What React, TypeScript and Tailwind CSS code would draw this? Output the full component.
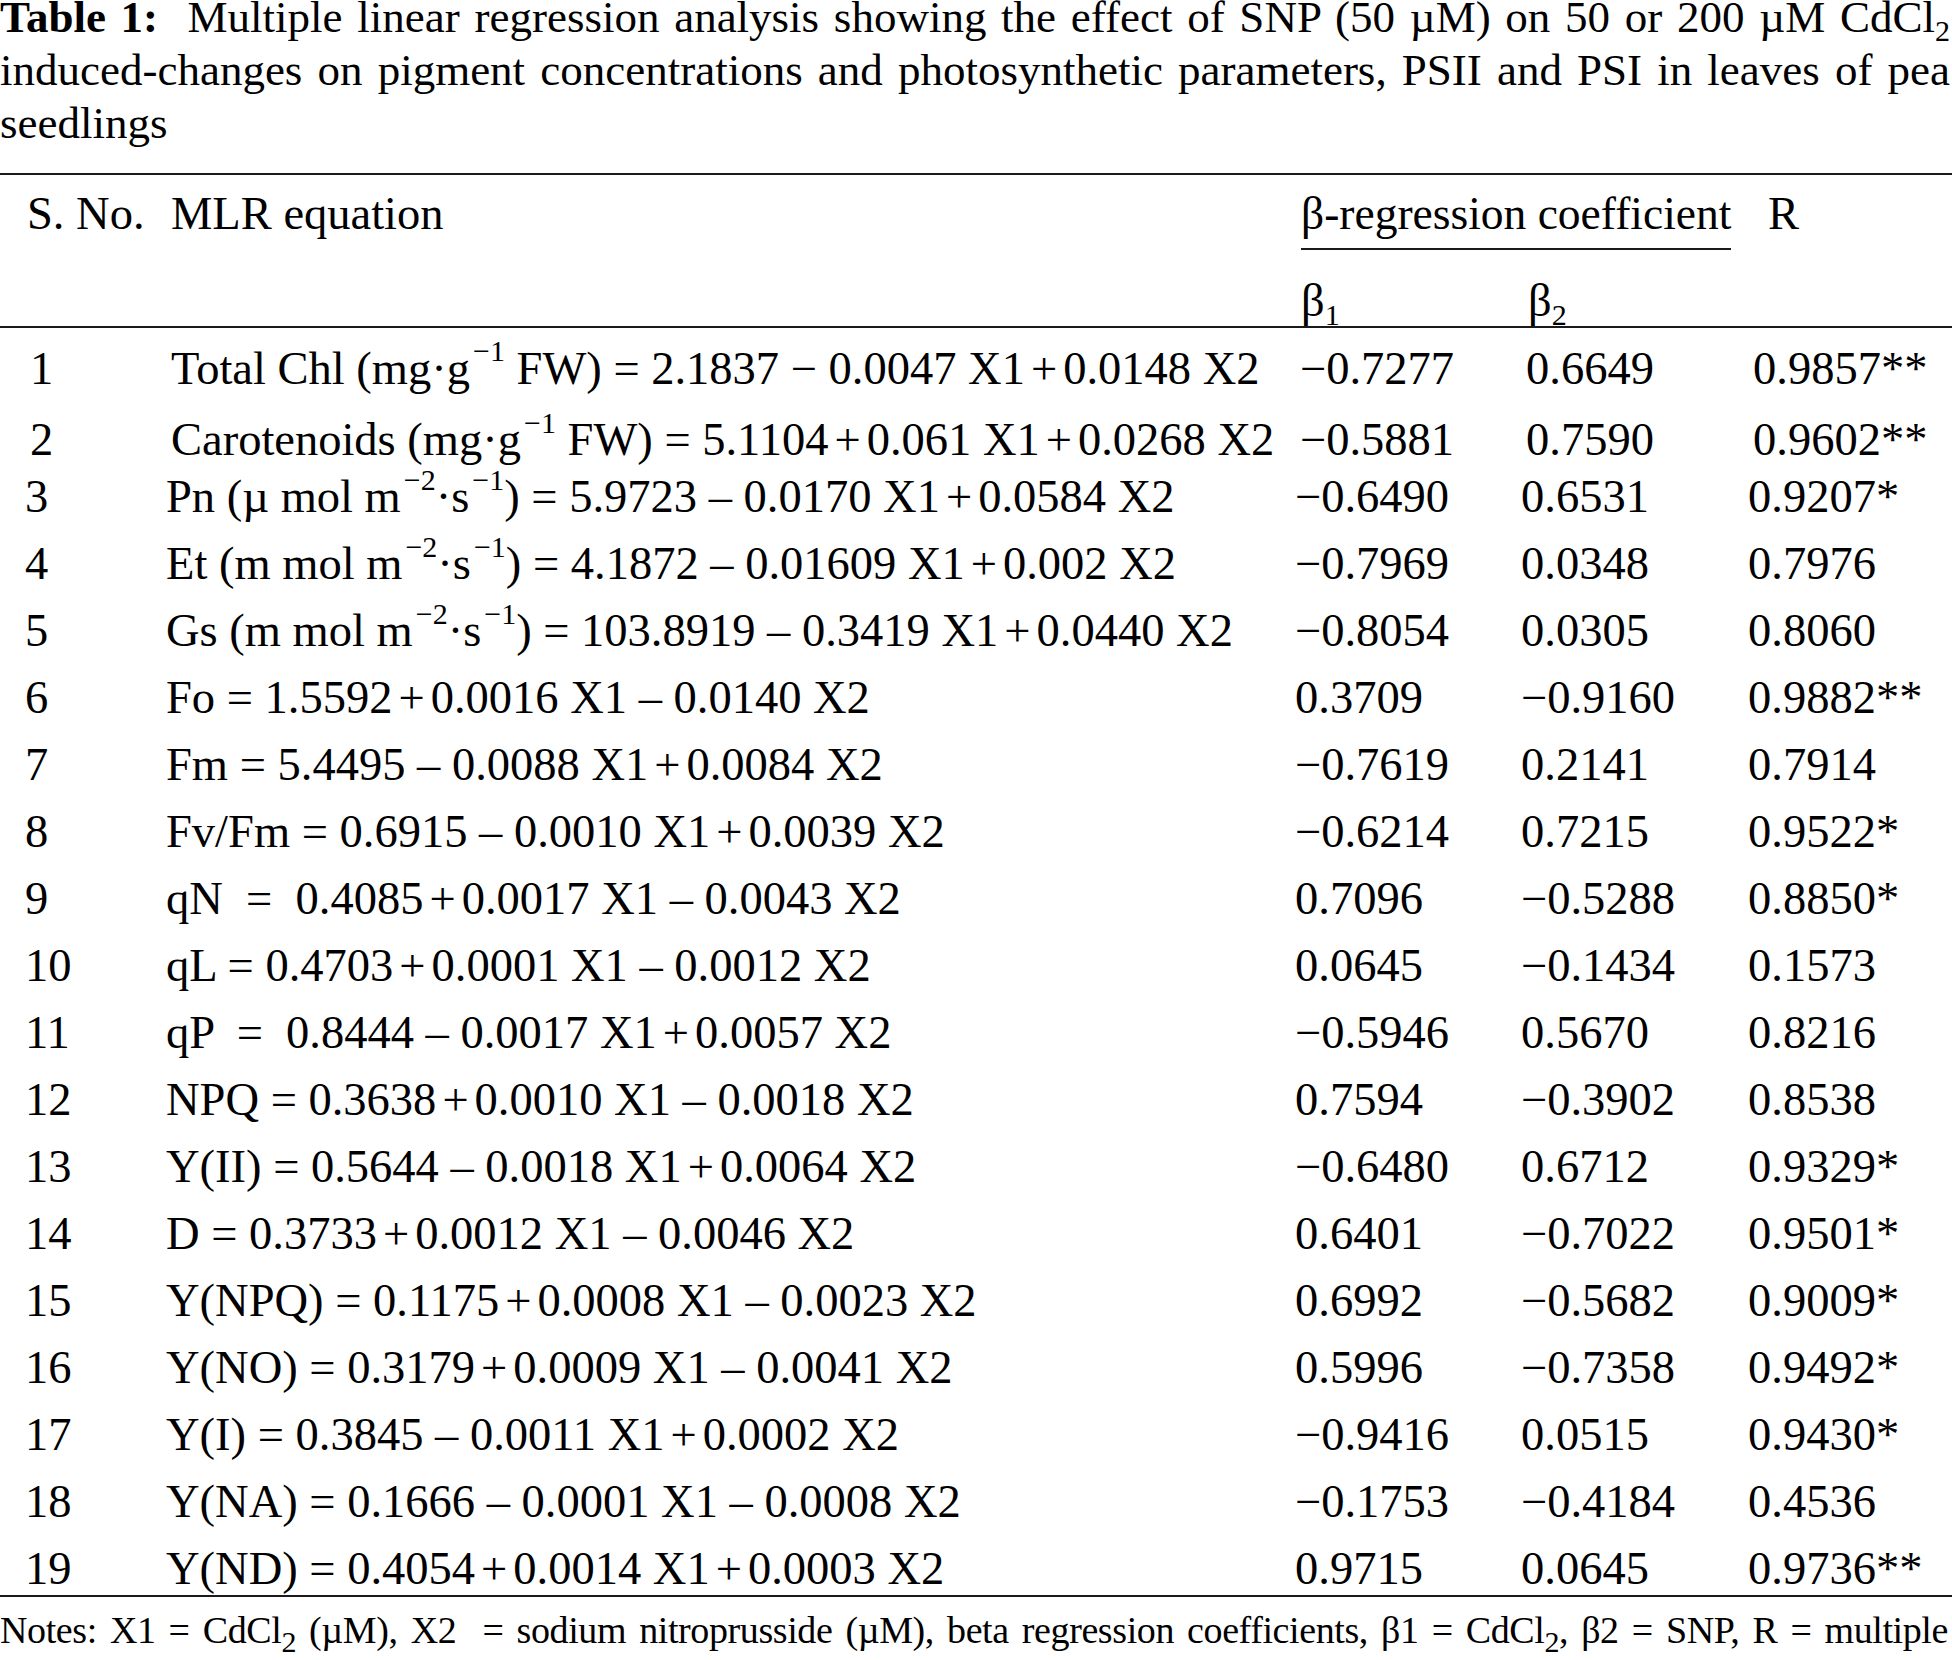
import React from 'react';

const P = () => <span className="mx-[6px]">+</span>;
const Sup = ({ children }: { children: React.ReactNode }) => (
  <sup className="text-[30px] top-[-0.75em] ml-[3px]">{children}</sup>
);
const Sub = ({ children }: { children: React.ReactNode }) => (
  <sub className="text-[30px] bottom-[-0.3em]">{children}</sub>
);

const unit = (
  <>
    m<Sup>−2</Sup>·s<Sup>−1</Sup>
  </>
);

const rows: { eq: React.ReactNode; b1: string; b2: string; r: string }[] = [
  { eq: <>Total Chl (mg·g<Sup>−1</Sup> FW) = 2.1837 − 0.0047 X1<P />0.0148 X2</>, b1: '−0.7277', b2: '0.6649', r: '0.9857**' },
  { eq: <>Carotenoids (mg·g<Sup>−1</Sup> FW) = 5.1104<P />0.061 X1<P />0.0268 X2</>, b1: '−0.5881', b2: '0.7590', r: '0.9602**' },
  { eq: <>Pn (µ mol {unit}) = 5.9723 – 0.0170 X1<P />0.0584 X2</>, b1: '−0.6490', b2: '0.6531', r: '0.9207*' },
  { eq: <>Et (m mol {unit}) = 4.1872 – 0.01609 X1<P />0.002 X2</>, b1: '−0.7969', b2: '0.0348', r: '0.7976' },
  { eq: <>Gs (m mol {unit}) = 103.8919 – 0.3419 X1<P />0.0440 X2</>, b1: '−0.8054', b2: '0.0305', r: '0.8060' },
  { eq: <>Fo = 1.5592<P />0.0016 X1 – 0.0140 X2</>, b1: '0.3709', b2: '−0.9160', r: '0.9882**' },
  { eq: <>Fm = 5.4495 – 0.0088 X1<P />0.0084 X2</>, b1: '−0.7619', b2: '0.2141', r: '0.7914' },
  { eq: <>Fv/Fm = 0.6915 – 0.0010 X1<P />0.0039 X2</>, b1: '−0.6214', b2: '0.7215', r: '0.9522*' },
  { eq: <>qN &nbsp;= &nbsp;0.4085<P />0.0017 X1 – 0.0043 X2</>, b1: '0.7096', b2: '−0.5288', r: '0.8850*' },
  { eq: <>qL = 0.4703<P />0.0001 X1 – 0.0012 X2</>, b1: '0.0645', b2: '−0.1434', r: '0.1573' },
  { eq: <>qP &nbsp;= &nbsp;0.8444 – 0.0017 X1<P />0.0057 X2</>, b1: '−0.5946', b2: '0.5670', r: '0.8216' },
  { eq: <>NPQ = 0.3638<P />0.0010 X1 – 0.0018 X2</>, b1: '0.7594', b2: '−0.3902', r: '0.8538' },
  { eq: <>Y(II) = 0.5644 – 0.0018 X1<P />0.0064 X2</>, b1: '−0.6480', b2: '0.6712', r: '0.9329*' },
  { eq: <>D = 0.3733<P />0.0012 X1 – 0.0046 X2</>, b1: '0.6401', b2: '−0.7022', r: '0.9501*' },
  { eq: <>Y(NPQ) = 0.1175<P />0.0008 X1 – 0.0023 X2</>, b1: '0.6992', b2: '−0.5682', r: '0.9009*' },
  { eq: <>Y(NO) = 0.3179<P />0.0009 X1 – 0.0041 X2</>, b1: '0.5996', b2: '−0.7358', r: '0.9492*' },
  { eq: <>Y(I) = 0.3845 – 0.0011 X1<P />0.0002 X2</>, b1: '−0.9416', b2: '0.0515', r: '0.9430*' },
  { eq: <>Y(NA) = 0.1666 – 0.0001 X1 – 0.0008 X2</>, b1: '−0.1753', b2: '−0.4184', r: '0.4536' },
  { eq: <>Y(ND) = 0.4054<P />0.0014 X1<P />0.0003 X2</>, b1: '0.9715', b2: '0.0645', r: '0.9736**' },
];

const rowHeight = (i: number) => {
  if (i === 0) return 'h-[77px] pt-[4px]';
  if (i === 1) return 'h-[57px]';
  if (i === 18) return 'h-[61px]';
  return 'h-[67px]';
};

export default function App() {
  return (
    <div className="w-[1952px] h-[1660px] overflow-hidden bg-white text-black font-['Liberation_Serif',serif] text-[46.5px]">
      {/* caption */}
      <div className="-mt-[9px] w-[1950px] text-[45px] leading-[53px]">
        <div className="text-justify [text-align-last:justify] whitespace-nowrap">
          <b>Table 1:</b>&nbsp; Multiple linear regression analysis showing the effect of SNP (50 µM) on 50 or 200 µM CdCl<Sub>2</Sub>
        </div>
        <div className="text-justify [text-align-last:justify] whitespace-nowrap">
          induced-changes on pigment concentrations and photosynthetic parameters, PSII and PSI in leaves of pea
        </div>
        <div>seedlings</div>
      </div>

      <div className="mt-[23px] h-[2px] bg-[#1a1a1a]" />

      {/* header */}
      <div className="grid grid-cols-[141px_1129px_226px_227px_204px] pl-[25px] leading-[50px]">
        <div className="h-[75px] pt-[14px] pl-[2px]">S. No.</div>
        <div className="h-[75px] pt-[14px] pl-[5px]">MLR equation</div>
        <div className="col-span-2 h-[75px] pt-[14px] pl-[6px]">
          <span className="inline-block border-b-2 border-[#1a1a1a] pb-[9px] text-[45.5px]">β-regression coefficient</span>
        </div>
        <div className="h-[75px] pt-[14px] pl-[20px]">R</div>

        <div className="h-[76px]" />
        <div className="h-[76px]" />
        <div className="h-[76px] pt-[26px] pl-[6px]">β<Sub>1</Sub></div>
        <div className="h-[76px] pt-[26px] pl-[7px]">β<Sub>2</Sub></div>
        <div className="h-[76px]" />
      </div>

      <div className="h-[2px] bg-[#1a1a1a]" />

      {/* body */}
      <div className="pl-[25px]">
        {rows.map((row, i) => (
          <div
            key={i}
            className={`grid grid-cols-[141px_1129px_226px_227px_204px] items-center whitespace-nowrap ${rowHeight(i)} ${i < 2 ? 'pl-[5px]' : ''}`}
          >
            <div>{i + 1}</div>
            <div>{row.eq}</div>
            <div>{row.b1}</div>
            <div>{row.b2}</div>
            <div>{row.r}</div>
          </div>
        ))}
      </div>

      <div className="h-[2px] bg-[#1a1a1a]" />

      <div className="mt-[10px] w-[1948px] text-[38px] tracking-[-0.4px] leading-[46px] text-justify [text-align-last:justify] whitespace-nowrap">
        Notes: X1 = CdCl<Sub>2</Sub> (µM), X2 &nbsp;= sodium nitroprusside (µM), beta regression coefficients, β1 = CdCl<Sub>2</Sub>, β2 = SNP, R = multiple
      </div>
    </div>
  );
}
